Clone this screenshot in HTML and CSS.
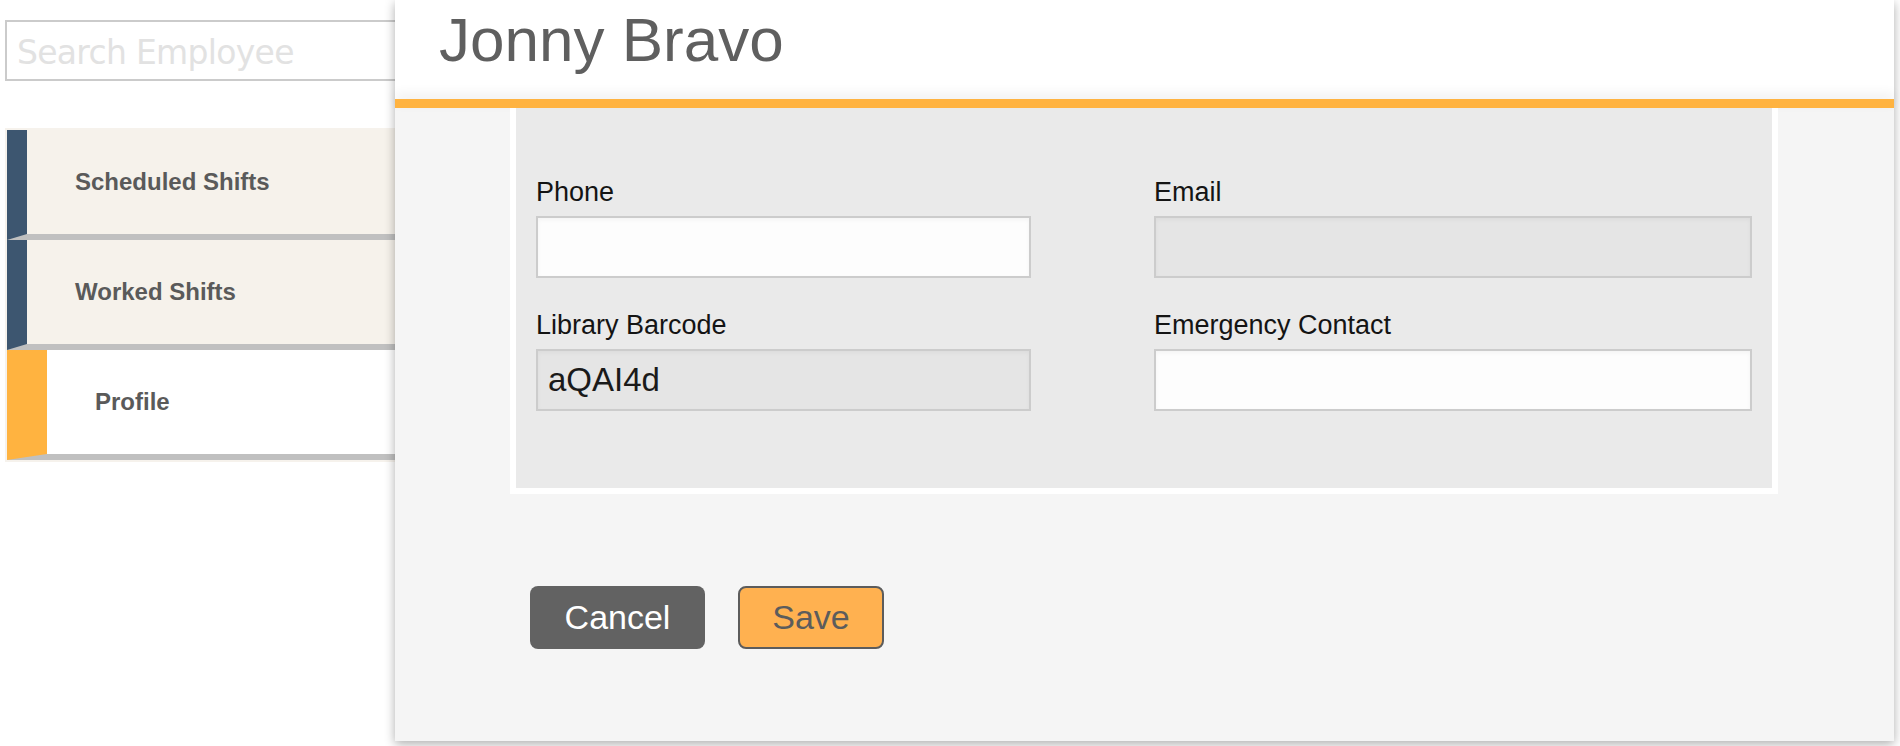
FILE: index.html
```html
<!DOCTYPE html>
<html>
<head>
<meta charset="utf-8">
<link rel="stylesheet" href="styles.css">
</head>
<body>
<div class="page">
  <aside class="sidebar">
    <input class="search" type="text" placeholder="Search Employee">
    <nav class="menu">
      <a class="menu-item">Scheduled Shifts</a>
      <a class="menu-item">Worked Shifts</a>
      <a class="menu-item active">Profile</a>
    </nav>
  </aside>
</div>

<section class="modal">
  <header class="modal-header">
    <h1 class="modal-title">Jonny Bravo</h1>
  </header>
  <div class="modal-accent"></div>
  <div class="modal-body">
    <div class="panel">
      <div class="form-grid">
        <div class="field">
          <label class="field-label">Phone</label>
          <input class="field-input narrow" type="text">
        </div>
        <div class="field">
          <label class="field-label">Email</label>
          <input class="field-input disabled" type="text" disabled>
        </div>
        <div class="field">
          <label class="field-label">Library Barcode</label>
          <input class="field-input narrow disabled" type="text" value="aQAI4d" disabled>
        </div>
        <div class="field">
          <label class="field-label">Emergency Contact</label>
          <input class="field-input" type="text">
        </div>
      </div>
    </div>
    <div class="actions">
      <button class="btn btn-cancel">Cancel</button>
      <button class="btn btn-save">Save</button>
    </div>
  </div>
</section>
</body>
</html>
```
FILE: styles.css
```css
html, body {
  margin: 0;
  padding: 0;
  background: #ffffff;
  font-family: "Liberation Sans", Arial, sans-serif;
}

.page {
  display: flex;
  padding: 20px 0 0 5px;
}

.sidebar {
  width: 440px;
  display: flex;
  flex-direction: column;
  gap: 47px;
}

.search {
  box-sizing: border-box;
  width: 100%;
  height: 61px;
  margin: 0;
  border: 2px solid #cbcbcb;
  padding: 4px 0 0 10px;
  font-family: "DejaVu Sans", Verdana, sans-serif;
  font-size: 33px;
  letter-spacing: -0.7px;
  color: #333;
  background: #fff;
  outline: none;
}

.search::placeholder {
  color: #e2e2e2;
}

.menu {
  display: flex;
  flex-direction: column;
  background: #f6f2ec;
  padding: 2px 0 2px 2px;
}

.menu-item {
  display: flex;
  align-items: center;
  height: 104px;
  padding-left: 48px;
  background: #f6f2eb;
  border-left: 20px solid #3d5670;
  border-bottom: 6px solid #c0c0c0;
  font-size: 24px;
  font-weight: bold;
  color: #5a5a5a;
}

.menu-item.active {
  background: #ffffff;
  border-left: 40px solid #ffb340;
}

.modal {
  position: absolute;
  left: 395px;
  top: 0;
  width: 1499px;
  display: flex;
  flex-direction: column;
  background: #f5f5f5;
  box-shadow: 0 3px 10px rgba(0, 0, 0, 0.32);
}

.modal-header {
  box-sizing: border-box;
  height: 99px;
  padding: 4px 0 0 44px;
  background: #ffffff;
}

.modal-title {
  margin: 0;
  font-size: 62px;
  font-weight: normal;
  line-height: 71px;
  color: #5f5f5f;
}

.modal-accent {
  height: 9px;
  background: #ffb340;
  box-shadow: 0 -5px 12px rgba(0, 0, 0, 0.07);
}

.modal-body {
  display: flex;
  flex-direction: column;
  padding: 0 116px 92px 115px;
}

.panel {
  background: #eaeaea;
  border: 6px solid #ffffff;
  border-top: 0;
  padding: 69px 20px 77px 20px;
}

.form-grid {
  display: grid;
  grid-template-columns: 618px 1fr;
  row-gap: 32px;
}

.field {
  display: flex;
  flex-direction: column;
  align-items: flex-start;
}

.field-label {
  font-size: 27px;
  line-height: 31px;
  color: #141414;
  margin-bottom: 8px;
}

.field-input {
  box-sizing: border-box;
  width: 100%;
  height: 62px;
  margin: 0;
  border: 2px solid #cccccc;
  padding: 0 0 0 10px;
  background: #fdfdfd;
  box-shadow: inset 0 2px 4px rgba(0, 0, 0, 0.04);
  font-family: "Liberation Sans", Arial, sans-serif;
  font-size: 33px;
  color: #1a1a1a;
  outline: none;
}

.field-input.narrow {
  width: 495px;
}

.field-input.disabled {
  background: #e5e5e5;
  color: #1a1a1a;
  -webkit-text-fill-color: #1a1a1a;
  opacity: 1;
}

.actions {
  display: flex;
  gap: 33px;
  margin-top: 92px;
  padding-left: 20px;
}

.btn {
  box-sizing: border-box;
  height: 63px;
  border-radius: 8px;
  font-family: "Liberation Sans", Arial, sans-serif;
  font-size: 34px;
  padding: 0;
  cursor: pointer;
}

.btn-cancel {
  width: 175px;
  background: #626262;
  color: #ffffff;
  border: 0;
}

.btn-save {
  width: 146px;
  background: #ffb150;
  color: #5c5c5c;
  border: 2px solid #5c5c5c;
}
```
